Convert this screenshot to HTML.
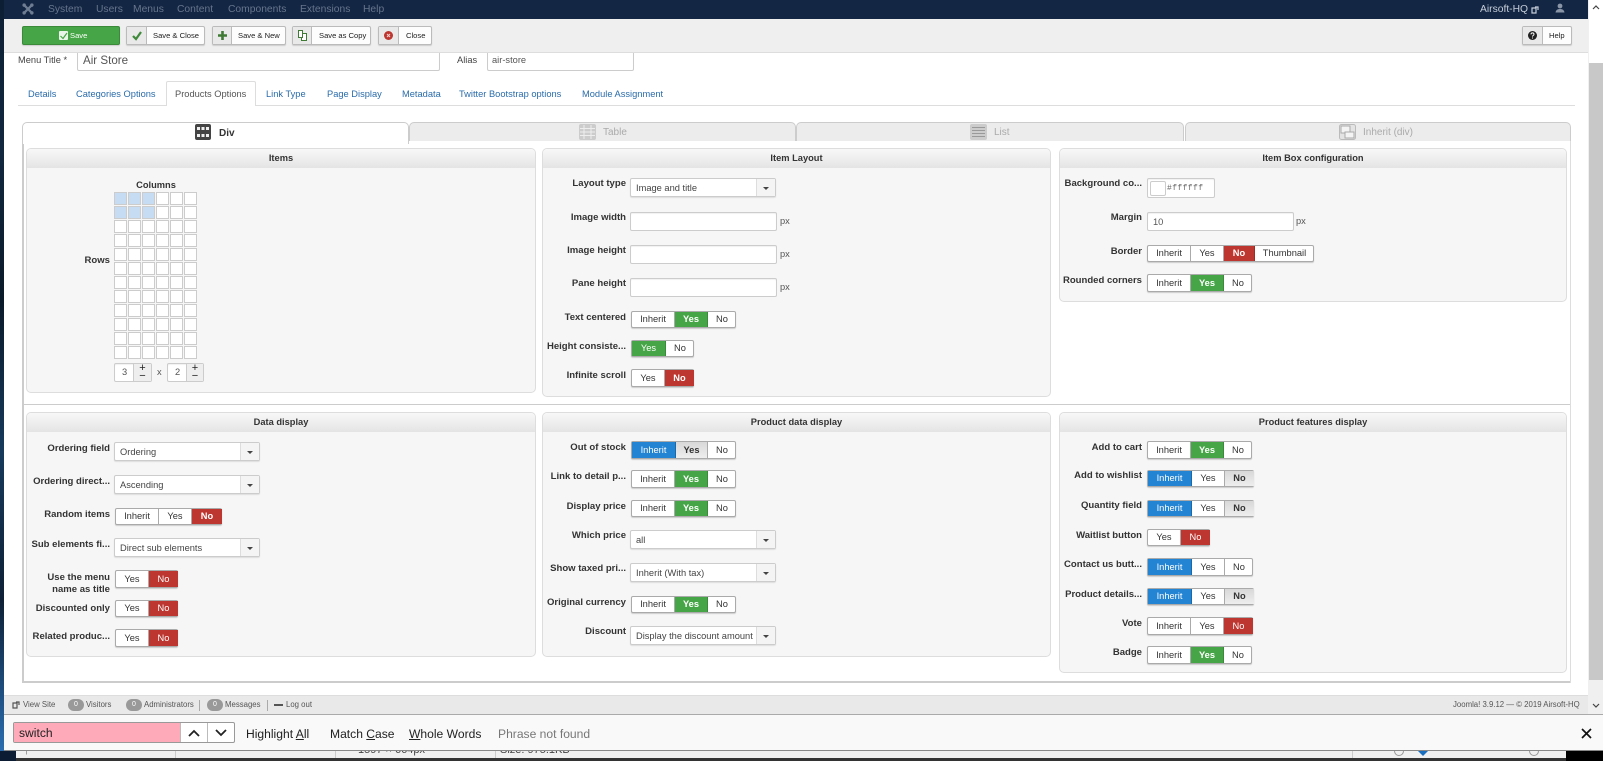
<!DOCTYPE html>
<html><head><meta charset="utf-8"><title>Air Store</title>
<style>
html,body{margin:0;padding:0;width:1603px;height:761px;overflow:hidden;background:#fff}
body{position:relative;font-family:"Liberation Sans",Arial,sans-serif;color:#333;font-size:9.3px}
div,span,a{position:absolute;box-sizing:border-box;white-space:nowrap}
svg{position:absolute;overflow:visible}
.m{top:4px;font-size:10.3px;color:#66758c;line-height:12px}
.btn{top:26px;height:19px;background:#fdfdfd;border:1px solid #bbb;border-radius:2px;font-size:7.6px;line-height:17px;color:#222;box-shadow:0 1px 1px #ccc}
.btn .ic{left:0;top:0;bottom:0;background:#e9e9e9;border-right:1px solid #bbb}
.btn .tx{top:0;line-height:17px}
.in{background:#fff;border:1px solid #ccc;border-radius:2px;box-shadow:inset 0 1px 1px rgba(0,0,0,.06)}
.tab{top:94px;margin-top:-6px;line-height:12px;color:#2a6cab;font-size:9.3px}
.wt{top:122px;height:19px;background:#ececec;border:1px solid #ccc;border-bottom:0;border-radius:5px 5px 0 0}
.wl{top:126px;line-height:13px;font-size:10px;color:#aaa}
.p{background:#f6f6f6;border:1px solid #ddd;border-radius:5px;overflow:hidden}
.h{left:0;right:0;top:0;height:19px;background:linear-gradient(#f8f8f8,#e4e4e4);text-align:center;font-weight:bold;font-size:9.3px;line-height:18px;color:#333}
.l{font-weight:bold;font-size:9.55px;line-height:12px;text-align:right;color:#333}
.a{left:24px;width:86px}.b{left:530px;width:96px}.c{left:1046px;width:96px}
.tg{height:18px;display:block;background:#fff;border:1px solid #aaa;border-radius:2px;box-shadow:0 1px 1px #ccc}
.tg span{top:0;bottom:0;text-align:center;line-height:16px;font-size:9.3px;color:#333;border-right:1px solid #aaa}
.tg span:last-child{border-right:0}
.tg.q{height:17px}
.tg.q span{line-height:14px}
.g{background:#46a546;color:#fff!important;font-weight:bold;border-color:#3a8a3a!important}
.r{background:#bd362f;color:#fff!important;font-weight:bold;border-color:#9c2c26!important}
.u{background:#2384d3;color:#fff!important;border-color:#1a6aab!important}
.k{background:linear-gradient(#d8d8d8,#eee);font-weight:bold}
.s{width:146px;height:19px;background:#fff;border:1px solid #ccc;border-radius:2px;font-size:9.3px;line-height:18px;padding-left:5px;color:#444;box-shadow:0 1px 1px #ddd}
.s i{position:absolute;right:0;top:0;bottom:0;width:18px;background:#f4f4f4;border-left:1px solid #ddd}
.s i:after{content:"";position:absolute;left:6px;top:8px;border:3px solid transparent;border-top:3px solid #444;border-bottom:0}
.f{width:147px;height:19px}
.px{font-size:9.3px;color:#555;line-height:12px}
.st{top:699px;font-size:7.8px;line-height:12px;color:#555}
.bd{top:699px;width:16px;height:12px;border-radius:6px;background:#999;color:#fff;font-size:7px;line-height:12px;text-align:center}
.fd{top:727px;font-size:12.1px;line-height:15px;color:#222}
</style></head><body>

<!-- desktop wallpaper sliver -->
<div style="left:0;top:0;width:4px;height:751px;background:linear-gradient(#0c1e33 0,#12283f 20%,#0a1a2a 40%,#173a5c 60%,#0e2036 80%,#2a6db0 100%)"></div>
<div style="left:0;top:751px;width:16px;height:10px;background:#0c1c33"></div>

<!-- title row -->
<div style="left:18px;top:54px;line-height:12px;font-size:9.3px;color:#444">Menu Title *</div>
<div class="in" style="left:77px;top:48px;width:363px;height:23px;font-size:11.6px;line-height:23px;padding-left:5px;color:#555">Air Store</div>
<div style="left:457px;top:54px;line-height:12px;color:#444">Alias</div>
<div class="in" style="left:487px;top:48px;width:147px;height:23px;line-height:22px;padding-left:4px;color:#555">air-store</div>

<!-- top nav -->
<div style="left:4px;top:0;width:1584px;height:19px;background:#132644"></div>
<svg style="left:22px;top:3px" width="12" height="12" viewBox="0 0 14 14"><g fill="none" stroke="#6f7d92" stroke-width="2.6"><path d="M2 2 L12 12M12 2 L2 12"/></g><circle cx="2.5" cy="2.5" r="2" fill="#6f7d92"/><circle cx="11.5" cy="2.5" r="2" fill="#6f7d92"/><circle cx="2.5" cy="11.5" r="2" fill="#6f7d92"/><circle cx="11.5" cy="11.5" r="2" fill="#6f7d92"/></svg>
<div class="m" style="left:48px">System</div><div class="m" style="left:96px">Users</div><div class="m" style="left:133px">Menus</div><div class="m" style="left:177px">Content</div><div class="m" style="left:228px">Components</div><div class="m" style="left:300px">Extensions</div><div class="m" style="left:363px">Help</div>
<div class="m" style="left:1480px;color:#c6cdd8">Airsoft-HQ</div>
<svg style="left:1531px;top:6px" width="8" height="8" viewBox="0 0 8 8"><path d="M1 2h4v5H1zM4 1h3v3" fill="none" stroke="#c6cdd8" stroke-width="1.2"/></svg>
<svg style="left:1555px;top:3px" width="10" height="10" viewBox="0 0 10 10"><circle cx="5" cy="3" r="2.4" fill="#8a96a8"/><path d="M0.5 9.5c.5-3 2.500-3.500 4.500-3.500s4 .5 4.500 3.500z" fill="#8a96a8"/></svg>

<!-- toolbar -->
<div style="left:4px;top:19px;width:1584px;height:34px;background:#efefef;border-bottom:1px solid #ddd"></div>
<div class="btn" style="left:22px;width:98px;background:#46a546;border-color:#3a8a3a;color:#fff"><svg style="left:36px;top:4px" width="9" height="9" viewBox="0 0 9 9"><rect width="9" height="9" rx="1" fill="#e8f4e8"/><path d="M1.500 5 L4 7.500 L8 2" fill="none" stroke="#46a546" stroke-width="1.2"/></svg><span class="tx" style="left:47px">Save</span></div>
<div class="btn" style="left:126px;width:79px"><div class="ic" style="width:20px"><svg style="left:5px;top:4px" width="10" height="9" viewBox="0 0 10 9"><path d="M1 5 L4 8 L9 1" fill="none" stroke="#3f8a3a" stroke-width="2.2"/></svg></div><span class="tx" style="left:26px">Save &amp; Close</span></div>
<div class="btn" style="left:212px;width:74px"><div class="ic" style="width:19px"><svg style="left:5px;top:4px" width="9" height="9" viewBox="0 0 9 9"><path d="M4.500 0v9M0 4.500h9" stroke="#3f7a34" stroke-width="2.6"/></svg></div><span class="tx" style="left:25px">Save &amp; New</span></div>
<div class="btn" style="left:292px;width:79px"><div class="ic" style="width:19px"><svg style="left:5px;top:3px" width="9" height="11" viewBox="0 0 9 11"><path d="M.5.5h4v7h-4zM4 3.500h4.500v7h-5v-3" fill="#fff" stroke="#3f7a34" stroke-width="1"/></svg></div><span class="tx" style="left:26px">Save as Copy</span></div>
<div class="btn" style="left:378px;width:54px"><div class="ic" style="width:20px"><svg style="left:5px;top:4px" width="9" height="9" viewBox="0 0 9 9"><circle cx="4.500" cy="4.500" r="4.500" fill="#bd362f"/><path d="M3 3l3 3M6 3L3 6" stroke="#f2d0ce" stroke-width="1.1"/></svg></div><span class="tx" style="left:27px">Close</span></div>
<div class="btn" style="left:1522px;width:50px"><div class="ic" style="width:20px"><svg style="left:5px;top:4px" width="9" height="9" viewBox="0 0 9 9"><circle cx="4.500" cy="4.500" r="4.500" fill="#222"/><path d="M3 3.400c0-2 3-2 3 0 0 1-1.500 1-1.500 2.200" fill="none" stroke="#fff" stroke-width="1"/><rect x="4" y="6.500" width="1" height="1" fill="#fff"/></svg></div><span class="tx" style="left:26px">Help</span></div>

<!-- tabs -->
<div style="left:18px;top:105px;width:1557px;height:1px;background:#ddd"></div>
<div style="left:166px;top:81px;width:90px;height:25px;background:#fff;border:1px solid #ddd;border-bottom:0;border-radius:2px 2px 0 0"></div>
<div class="tab" style="left:28px">Details</div><div class="tab" style="left:76px">Categories Options</div><div class="tab" style="left:175px;color:#555">Products Options</div><div class="tab" style="left:266px">Link Type</div><div class="tab" style="left:327px">Page Display</div><div class="tab" style="left:402px">Metadata</div><div class="tab" style="left:459px">Twitter Bootstrap options</div><div class="tab" style="left:582px">Module Assignment</div>

<!-- main frame -->
<div style="left:22px;top:140px;width:2px;height:543px;background:#ccc"></div>
<div style="left:22px;top:681px;width:1549px;height:2px;background:#ccc"></div>
<div style="left:1570px;top:140px;width:1px;height:543px;background:#ddd"></div>
<div class="wt" style="left:22px;width:387px;background:#fff;height:22px;z-index:2;border-bottom:0"></div>
<div class="wt" style="left:409px;width:387px"></div>
<div class="wt" style="left:796px;width:388px"></div>
<div class="wt" style="left:1185px;width:386px"></div>
<svg style="left:195px;top:124px;z-index:3" width="16" height="16" viewBox="0 0 16 16"><rect width="16" height="16" rx="2" fill="#444"/><g fill="#eee"><rect x="2" y="3" width="3" height="3"/><rect x="6.500" y="3" width="3" height="3"/><rect x="11" y="3" width="3" height="3"/><rect x="2" y="10" width="3" height="3"/><rect x="6.500" y="10" width="3" height="3"/><rect x="11" y="10" width="3" height="3"/></g></svg>
<div class="wl" style="left:219px;z-index:3;top:127px;font-weight:bold;color:#333">Div</div>
<svg style="left:579px;top:124px" width="17" height="16" viewBox="0 0 17 16"><rect width="17" height="16" rx="2" fill="#ccc"/><path d="M1 4.500h15M1 8h15M1 11.500h15M5 1v14M12 1v14" stroke="#eee" stroke-width="1"/></svg>
<div class="wl" style="left:603px">Table</div>
<svg style="left:970px;top:124px" width="17" height="16" viewBox="0 0 17 16"><rect width="17" height="16" rx="2" fill="#ccc"/><path d="M2 3.500h13M2 6.500h13M2 9.500h13M2 12.500h13" stroke="#999" stroke-width="1"/></svg>
<div class="wl" style="left:994px">List</div>
<svg style="left:1339px;top:124px" width="17" height="16" viewBox="0 0 17 16"><rect x=".5" y=".5" width="16" height="15" rx="2" fill="#e4e4e4" stroke="#bbb"/><rect x="2" y="2" width="9" height="7" fill="#f4f4f4" stroke="#aaa"/><rect x="6" y="8" width="9" height="6" fill="#f4f4f4" stroke="#aaa"/></svg>
<div class="wl" style="left:1363px">Inherit (div)</div>

<!-- panels row 1 -->
<div class="p" style="left:26px;top:148px;width:510px;height:245px"><div class="h">Items</div></div>
<div class="p" style="left:542px;top:148px;width:509px;height:249px"><div class="h">Item Layout</div></div>
<div class="p" style="left:1059px;top:148px;width:508px;height:154px"><div class="h">Item Box configuration</div></div>
<div style="left:24px;top:404px;width:1546px;height:1px;background:#ccc"></div>
<!-- panels row 2 -->
<div class="p" style="left:26px;top:412px;width:510px;height:245px"><div class="h">Data display</div></div>
<div class="p" style="left:542px;top:412px;width:509px;height:245px"><div class="h">Product data display</div></div>
<div class="p" style="left:1059px;top:412px;width:508px;height:261px"><div class="h">Product features display</div></div>

<!-- Items grid -->
<div style="left:116px;top:179px;width:80px;text-align:center;font-size:9.3px;line-height:12px;font-weight:bold">Columns</div>
<div class="l" style="left:60px;width:50px;top:255px">Rows</div>
<svg style="left:114px;top:192px" width="84" height="168" viewBox="0 0 84 168">
<defs><pattern id="c" width="14" height="14" patternUnits="userSpaceOnUse"><rect x=".5" y=".5" width="12" height="12" fill="#fff" stroke="#ccc"/></pattern><pattern id="d" width="14" height="14" patternUnits="userSpaceOnUse"><rect x=".5" y=".5" width="12" height="12" fill="#c6dcf2" stroke="#ccc"/></pattern></defs>
<rect width="84" height="168" fill="url(#c)"/><rect width="42" height="28" fill="url(#d)"/></svg>
<div class="in" style="left:114px;top:363px;width:38px;height:19px;background:#fff;line-height:17px;padding-left:7px;color:#555">3<span style="left:18px;top:0;bottom:0;right:0;background:#eee;border-left:1px solid #ccc;text-align:center;line-height:8px;font-size:11px;color:#222">+<br>−</span></div>
<div style="left:157px;top:366px;line-height:12px;color:#555">x</div>
<div class="in" style="left:167px;top:363px;width:37px;height:19px;background:#fff;line-height:17px;padding-left:7px;color:#555">2<span style="left:18px;top:0;bottom:0;right:0;background:#eee;border-left:1px solid #ccc;text-align:center;line-height:8px;font-size:11px;color:#222">+<br>−</span></div>

<!-- Item Layout -->
<div class="l b" style="top:178px">Layout type</div><div class="s" style="left:630px;top:178px">Image and title<i></i></div>
<div class="l b" style="top:212px">Image width</div><div class="in f" style="left:630px;top:212px"></div><div class="px" style="left:780px;top:215px">px</div>
<div class="l b" style="top:245px">Image height</div><div class="in f" style="left:630px;top:245px"></div><div class="px" style="left:780px;top:248px">px</div>
<div class="l b" style="top:278px">Pane height</div><div class="in f" style="left:630px;top:278px"></div><div class="px" style="left:780px;top:281px">px</div>
<div class="l b" style="top:312px">Text centered</div>
<div class="tg q" style="left:631px;top:311px;width:105px"><span style="left:0;width:43px">Inherit</span><span class="g" style="left:43px;width:33px">Yes</span><span style="left:76px;width:28px">No</span></div>
<div class="l b" style="top:341px">Height consiste...</div>
<div class="tg q" style="left:631px;top:340px;width:63px"><span class="g" style="left:0;width:34px;font-weight:normal">Yes</span><span style="left:34px;width:28px">No</span></div>
<div class="l b" style="top:370px">Infinite scroll</div>
<div class="tg" style="left:631px;top:369px;width:63px"><span style="left:0;width:33px">Yes</span><span class="r" style="left:33px;width:29px">No</span></div>

<!-- Item Box -->
<div class="l c" style="top:178px">Background co...</div>
<div class="in" style="left:1147px;top:178px;width:68px;height:20px;padding:0"><span style="left:2px;top:2px;width:16px;height:15px;background:#fff;border:1px solid #ccc;border-radius:2px"></span><span style="left:19px;top:0;line-height:19px;font-family:'Liberation Mono',monospace;font-size:8px;color:#666;letter-spacing:.4px">#ffffff</span></div>
<div class="l c" style="top:212px">Margin</div><div class="in f" style="left:1147px;top:212px;line-height:18px;padding-left:5px;color:#555">10</div><div class="px" style="left:1296px;top:215px">px</div>
<div class="l c" style="top:246px">Border</div>
<div class="tg q" style="left:1147px;top:245px;width:167px"><span style="left:0;width:43px">Inherit</span><span style="left:43px;width:33px">Yes</span><span class="r" style="left:76px;width:31px">No</span><span style="left:107px;width:59px">Thumbnail</span></div>
<div class="l c" style="top:275px">Rounded corners</div>
<div class="tg" style="left:1147px;top:274px;width:105px"><span style="left:0;width:43px">Inherit</span><span class="g" style="left:43px;width:33px">Yes</span><span style="left:76px;width:28px">No</span></div>

<!-- Data display -->
<div class="l a" style="top:443px">Ordering field</div><div class="s" style="left:114px;top:442px">Ordering<i></i></div>
<div class="l a" style="top:476px">Ordering direct...</div><div class="s" style="left:114px;top:475px">Ascending<i></i></div>
<div class="l a" style="top:509px">Random items</div>
<div class="tg q" style="left:115px;top:508px;width:107px"><span style="left:0;width:43px">Inherit</span><span style="left:43px;width:33px">Yes</span><span class="r" style="left:76px;width:30px">No</span></div>
<div class="l a" style="top:539px">Sub elements fi...</div><div class="s" style="left:114px;top:538px">Direct sub elements<i></i></div>
<div class="l a" style="top:572px">Use the menu</div><div class="l a" style="top:584px">name as title</div>
<div class="tg" style="left:115px;top:570px;width:63px"><span style="left:0;width:33px">Yes</span><span class="r" style="left:33px;width:29px;font-weight:normal">No</span></div>
<div class="l a" style="top:603px">Discounted only</div>
<div class="tg q" style="left:115px;top:600px;width:63px"><span style="left:0;width:33px">Yes</span><span class="r" style="left:33px;width:29px;font-weight:normal">No</span></div>
<div class="l a" style="top:631px">Related produc...</div>
<div class="tg" style="left:115px;top:629px;width:63px"><span style="left:0;width:33px">Yes</span><span class="r" style="left:33px;width:29px;font-weight:normal">No</span></div>

<!-- Product data display -->
<div class="l b" style="top:442px">Out of stock</div>
<div class="tg" style="left:631px;top:441px;width:105px"><span class="u" style="left:0;width:44px">Inherit</span><span class="k" style="left:44px;width:32px">Yes</span><span style="left:76px;width:28px">No</span></div>
<div class="l b" style="top:471px">Link to detail p...</div>
<div class="tg" style="left:631px;top:470px;width:105px"><span style="left:0;width:43px">Inherit</span><span class="g" style="left:43px;width:33px">Yes</span><span style="left:76px;width:28px">No</span></div>
<div class="l b" style="top:501px">Display price</div>
<div class="tg q" style="left:631px;top:500px;width:105px"><span style="left:0;width:43px">Inherit</span><span class="g" style="left:43px;width:33px">Yes</span><span style="left:76px;width:28px">No</span></div>
<div class="l b" style="top:530px">Which price</div><div class="s" style="left:630px;top:530px">all<i></i></div>
<div class="l b" style="top:563px">Show taxed pri...</div><div class="s" style="left:630px;top:563px">Inherit (With tax)<i></i></div>
<div class="l b" style="top:597px">Original currency</div>
<div class="tg q" style="left:631px;top:596px;width:105px"><span style="left:0;width:43px">Inherit</span><span class="g" style="left:43px;width:33px">Yes</span><span style="left:76px;width:28px">No</span></div>
<div class="l b" style="top:626px">Discount</div><div class="s" style="left:630px;top:626px">Display the discount amount<i></i></div>

<!-- Product features -->
<div class="l c" style="top:442px">Add to cart</div>
<div class="tg" style="left:1147px;top:441px;width:105px"><span style="left:0;width:43px">Inherit</span><span class="g" style="left:43px;width:33px">Yes</span><span style="left:76px;width:28px">No</span></div>
<div class="l c" style="top:470px">Add to wishlist</div>
<div class="tg q" style="left:1147px;top:470px;width:107px"><span class="u" style="left:0;width:44px">Inherit</span><span style="left:44px;width:33px">Yes</span><span class="k" style="left:77px;width:29px">No</span></div>
<div class="l c" style="top:500px">Quantity field</div>
<div class="tg q" style="left:1147px;top:500px;width:107px"><span class="u" style="left:0;width:44px">Inherit</span><span style="left:44px;width:33px">Yes</span><span class="k" style="left:77px;width:29px">No</span></div>
<div class="l c" style="top:530px">Waitlist button</div>
<div class="tg q" style="left:1147px;top:529px;width:63px"><span style="left:0;width:33px">Yes</span><span class="r" style="left:33px;width:29px;font-weight:normal">No</span></div>
<div class="l c" style="top:559px">Contact us butt...</div>
<div class="tg" style="left:1147px;top:558px;width:106px"><span class="u" style="left:0;width:44px">Inherit</span><span style="left:44px;width:33px">Yes</span><span style="left:77px;width:28px">No</span></div>
<div class="l c" style="top:589px">Product details...</div>
<div class="tg q" style="left:1147px;top:588px;width:107px"><span class="u" style="left:0;width:44px">Inherit</span><span style="left:44px;width:33px">Yes</span><span class="k" style="left:77px;width:29px">No</span></div>
<div class="l c" style="top:618px">Vote</div>
<div class="tg" style="left:1147px;top:617px;width:106px"><span style="left:0;width:43px">Inherit</span><span style="left:43px;width:33px">Yes</span><span class="r" style="left:76px;width:29px;font-weight:normal">No</span></div>
<div class="l c" style="top:647px">Badge</div>
<div class="tg" style="left:1147px;top:646px;width:105px"><span style="left:0;width:43px">Inherit</span><span class="g" style="left:43px;width:33px">Yes</span><span style="left:76px;width:28px">No</span></div>

<!-- status bar -->
<div style="left:4px;top:695px;width:1584px;height:19px;background:#e9e9e9;border-top:1px solid #ddd"></div>
<svg style="left:12px;top:701px" width="8" height="8" viewBox="0 0 8 8"><path d="M1 2h4v5H1zM4 1h3v3" fill="none" stroke="#555" stroke-width="1.2"/></svg>
<div class="st" style="left:23px">View Site</div>
<div class="bd" style="left:68px">0</div><div class="st" style="left:86px">Visitors</div>
<div class="bd" style="left:126px">0</div><div class="st" style="left:144px">Administrators</div>
<div style="left:199px;top:700px;width:1px;height:11px;background:#aaa"></div>
<div class="bd" style="left:207px">0</div><div class="st" style="left:225px">Messages</div>
<div style="left:267px;top:700px;width:1px;height:11px;background:#aaa"></div>
<div style="left:274px;top:704px;width:9px;height:2px;background:#555"></div><div class="st" style="left:286px">Log out</div>
<div class="st" style="left:1453px">Joomla! 3.9.12 — © 2019 Airsoft-HQ</div>

<!-- scrollbar -->
<div style="left:1588px;top:0;width:15px;height:714px;background:#f0f0f0"></div>
<div style="left:1589px;top:0;width:14px;height:63px;background:#fff"></div>
<div style="left:1589px;top:63px;width:14px;height:617px;background:#c8c8c8"></div>
<svg style="left:1592px;top:4px" width="8" height="6" viewBox="0 0 8 6"><path d="M1 5l3-3 3 3" fill="none" stroke="#444" stroke-width="1.2"/></svg>
<svg style="left:1592px;top:703px" width="8" height="6" viewBox="0 0 8 6"><path d="M1 1l3 3 3-3" fill="none" stroke="#444" stroke-width="1.2"/></svg>

<!-- find bar -->
<div style="left:4px;top:714px;width:1599px;height:37px;background:#f9f9f9;border-top:1px solid #aaa;border-bottom:1px solid #888"></div>
<div style="left:13px;top:722px;width:222px;height:21px;background:#fff;border:1px solid #999;border-radius:2px"></div>
<div style="left:14px;top:723px;width:166px;height:19px;background:#ffaab9;line-height:21px;font-size:12.1px;padding-left:5px;color:#222">switch</div>
<div style="left:180px;top:723px;width:1px;height:19px;background:#bbb"></div>
<div style="left:207px;top:723px;width:1px;height:19px;background:#bbb"></div>
<svg style="left:188px;top:729px" width="12" height="8" viewBox="0 0 12 8"><path d="M1 7l5-5 5 5" fill="none" stroke="#222" stroke-width="1.8"/></svg>
<svg style="left:215px;top:729px" width="12" height="8" viewBox="0 0 12 8"><path d="M1 1l5 5 5-5" fill="none" stroke="#222" stroke-width="1.8"/></svg>
<div class="fd" style="left:246px">Highlight <u>A</u>ll</div>
<div class="fd" style="left:330px">Match <u>C</u>ase</div>
<div class="fd" style="left:409px"><u>W</u>hole Words</div>
<div class="fd" style="left:498px;color:#777">Phrase not found</div>
<svg style="left:1581px;top:728px" width="11" height="11" viewBox="0 0 11 11"><path d="M1 1l9 9M10 1l-9 9" stroke="#111" stroke-width="1.7"/></svg>

<!-- bottom strip -->
<div style="left:16px;top:751px;width:1550px;height:7px;background:#f0f0f0;overflow:hidden">
<span style="left:8px;top:-6px;font-size:11px;color:#444">↑</span>
<span style="left:342px;top:-7px;font-size:11px;color:#444">1597 × 664px</span>
<span style="left:484px;top:-7px;font-size:11px;color:#444">Size: 975.1KB</span>
<span style="left:159px;top:0;width:1px;height:7px;background:#ccc"></span>
<span style="left:319px;top:0;width:1px;height:7px;background:#ccc"></span>
<span style="left:479px;top:0;width:1px;height:7px;background:#ccc"></span>
<span style="left:1336px;top:0;width:1px;height:7px;background:#ccc"></span>
<span style="left:1378px;top:-5px;width:10px;height:10px;border:1px solid #999;border-radius:50%"></span>
<span style="left:1402px;top:0;border:5px solid transparent;border-top:5px solid #1a6fc0;border-bottom:0"></span>
<span style="left:1513px;top:-5px;width:10px;height:10px;border:1px solid #999;border-radius:50%"></span>
</div>
<div style="left:1566px;top:751px;width:37px;height:10px;background:#000"></div>
<div style="left:16px;top:758px;width:1550px;height:3px;background:#333"></div>
</body></html>
